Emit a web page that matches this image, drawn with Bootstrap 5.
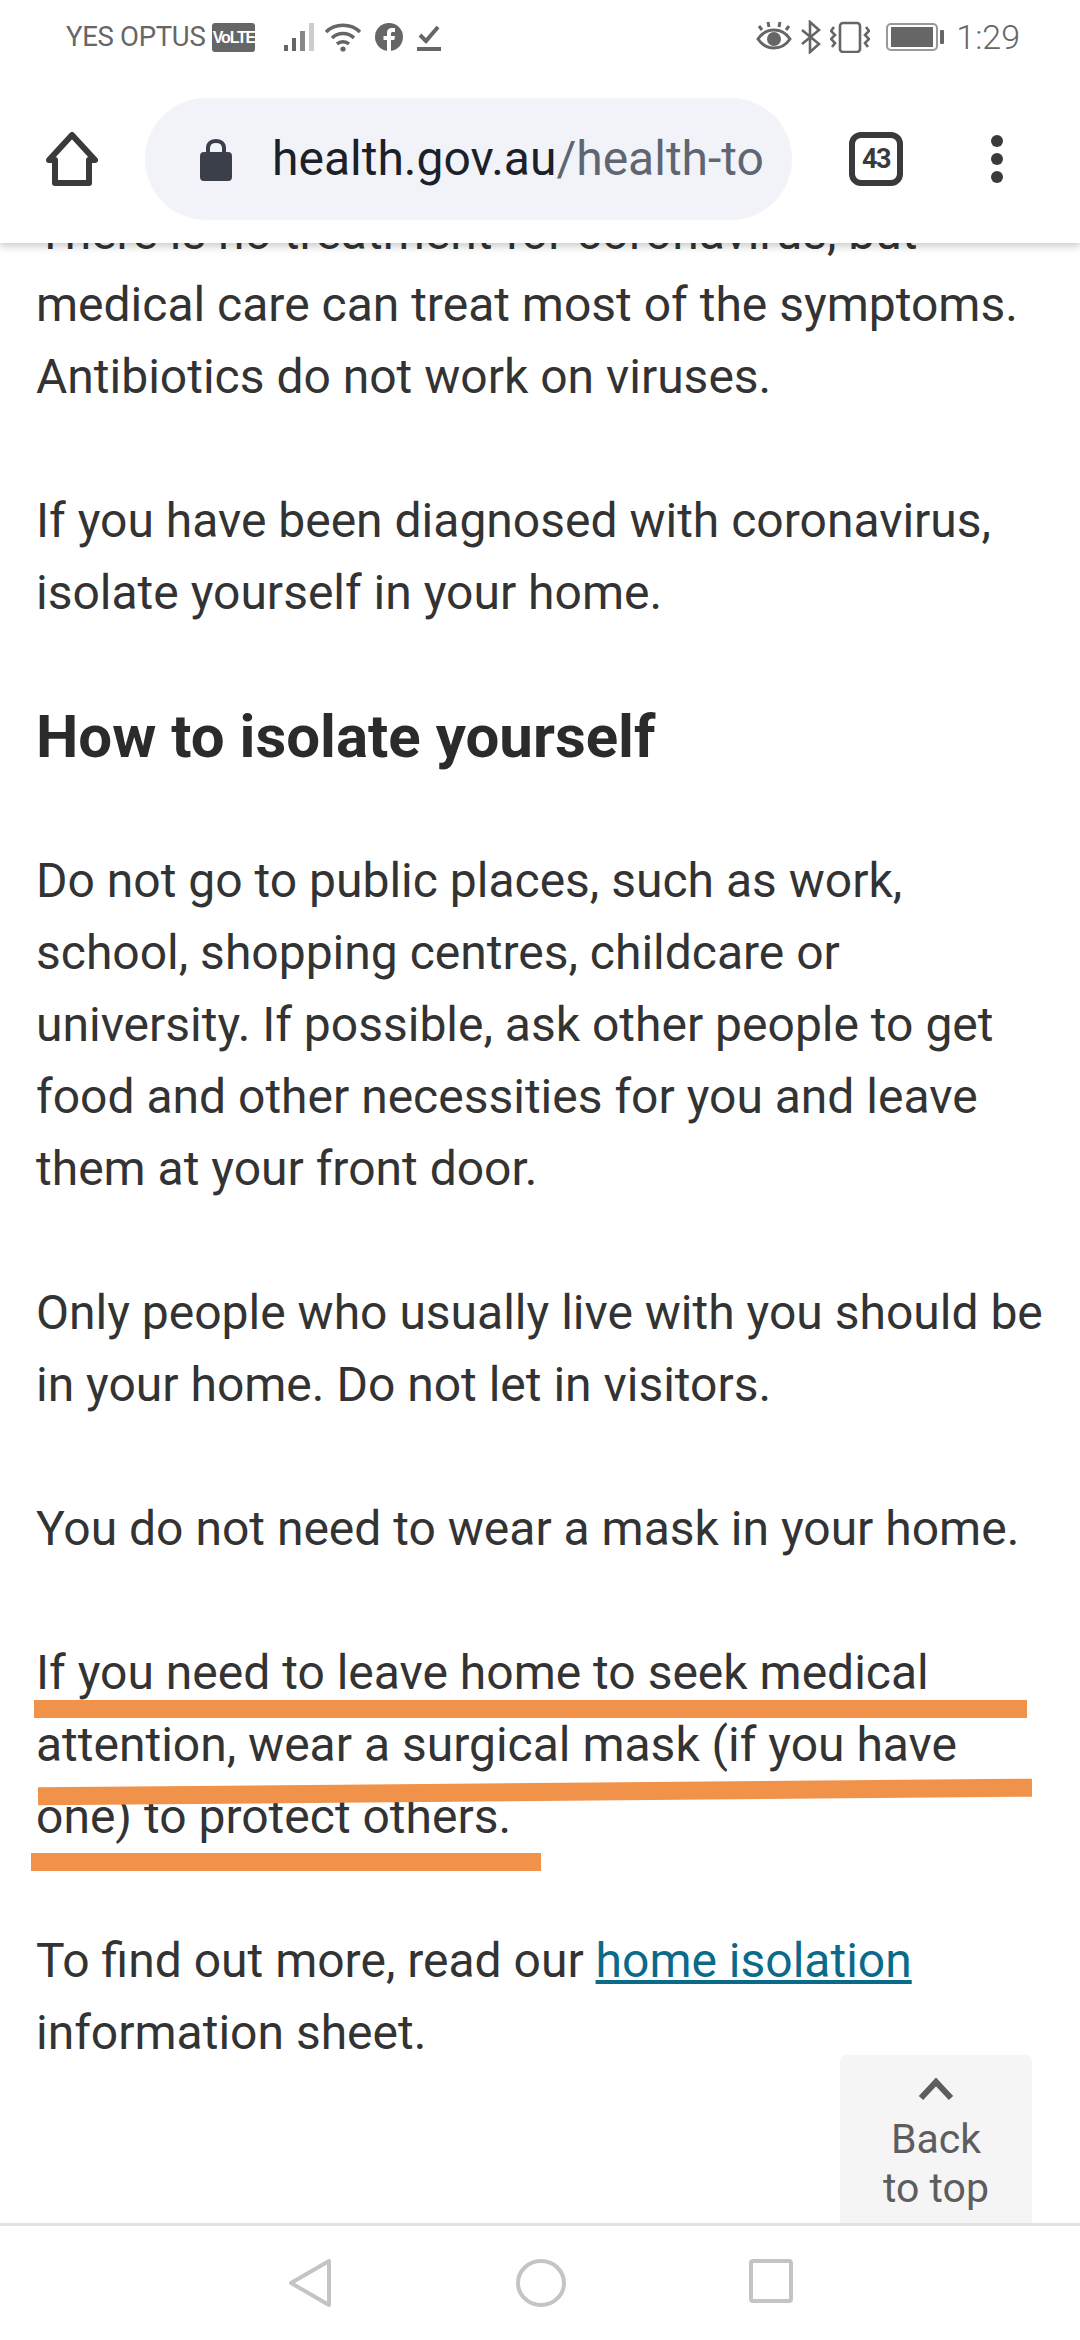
<!DOCTYPE html>
<html lang="en">
<head>
  <meta charset="UTF-8">
  <meta name="viewport" content="width=device-width, initial-scale=1.0">
  <title>How to isolate yourself</title>
  <link href="https://cdn.jsdelivr.net/npm/bootstrap@5.3.0/dist/css/bootstrap.min.css" rel="stylesheet">
  <style>
    body { font-family: Roboto, "Liberation Sans", sans-serif; color: #333; background: #fff; }
    .phone-frame { width: 1080px; height: 2340px; overflow: hidden; }
    .top-chrome { height: 243px; background: #fff; box-shadow: 0 3px 8px rgba(0,0,0,.22); z-index: 5; flex: none; }
    .status-row { height: 74px; padding: 0 60px 0 66px; color: #666; }
    .carrier { font-size: 27.5px; letter-spacing: -.3px; }
    .volte { width: 43px; height: 29px; background: #666; color: #fff; font: bold 16px/29px "Liberation Sans", sans-serif; text-align: center; border-radius: 3px; margin-left: 7px; letter-spacing: -1.2px; }
    .clock { font-size: 34px; font-weight: 300; margin-left: 12px; }
    .url-row { height: 122px; margin-top: 24px; padding-left: 46px; }
    .url-pill { width: 647px; height: 122px; margin-left: 47px; padding-left: 55px; background: #f1f3f9; border-radius: 61px; box-shadow: 0 0 0 1px #f5f5f6 inset; font-size: 48px; color: #5f6672; white-space: nowrap; }
    .url-pill b { font-weight: 400; color: #1c2129; }
    .url-pill svg { margin-right: 40px; flex: none; }
    .tab-count { width: 54px; height: 54px; margin-left: 57px; border: 6px solid #3a3a3c; border-radius: 12px; font: bold 27px/42px Roboto, sans-serif; color: #3a3a3c; text-align: center; letter-spacing: -1.5px; }
    .dots { margin-left: 88px; gap: 6px; }
    .dots i { display: block; width: 12px; height: 12px; border-radius: 50%; background: #3a3a3c; }
    .article { flex: 1 1 auto; min-height: 0; overflow: hidden; padding: 0 30px 0 36px; }
    .article-flow { margin-top: -46px; font-size: 48px; line-height: 72px; }
    .article-flow p { margin: 0 0 72px; }
    .article-flow h2 { margin: 0 0 72px; font-size: 60px; line-height: 72px; font-weight: 700; color: #2b2b2b; }
    .article-flow a { color: #0b6a8a; }
    .marker { position: absolute; height: 18px; background: #f0924a; }
    .marker-one { left: -2px; top: 63px; width: 993px; }
    .marker-two { left: 2px; top: 146px; width: 994px; transform: rotate(-.5deg); }
    .marker-three { left: -5px; top: 216px; width: 510px; }
    .back-top { right: 48px; bottom: 0; width: 192px; height: 168px; background: #f5f5f6; border-radius: 6px 6px 0 0; color: #5d5d60; font-size: 41px; line-height: 49px; padding-top: 22px; }
    .back-top svg { margin-bottom: 14px; }
    .bottom-nav { height: 117px; flex: none; border-top: 3px solid #e3e3e3; background: #fff; padding-top: 33px; padding-left: 289px; }
    .bottom-nav svg { display: block; flex: none; }
    .signal-icon { margin-left: 28px; }
    .wifi-icon { margin-left: 5px; }
    .facebook-icon { margin-left: 12px; }
    .check-icon { margin-left: 13px; }
    .vibrate-icon { margin-left: 8px; }
  </style>
</head>
<body>
  <div class="phone-frame d-flex flex-column position-relative">
    <header class="top-chrome position-relative">
      <div class="status-row d-flex align-items-center">
        <span class="carrier">YES OPTUS</span>
        <span class="volte">VoLTE</span>
        <svg class="signal-icon" width="36" height="32" viewBox="0 0 36 32"><rect x="1" y="24" width="4" height="6" fill="#666"/><rect x="9" y="17" width="4" height="13" fill="#666"/><rect x="17" y="10" width="5" height="20" fill="#888"/><rect x="26" y="2" width="5" height="28" fill="#ccc"/></svg>
        <svg class="wifi-icon" width="38" height="32" viewBox="0 0 38 32" fill="none" stroke="#666" stroke-width="3.4"><path d="M2 11C11 2 27 2 36 11"/><path d="M8 17C14 11 24 11 30 17"/><path d="M13 23C16 20 22 20 25 23"/><circle cx="19" cy="28" r="2.6" fill="#666" stroke="none"/></svg>
        <svg class="facebook-icon" width="30" height="30" viewBox="0 0 30 30"><circle cx="15" cy="15" r="14" fill="#666"/><path d="M13 29V18H9.500V14H13V11C13 7.500 15 6 18 6H21V10H19C17.500 10 17 10.500 17 12V14H21L20.300 18H17V29Z" fill="#fff"/></svg>
        <svg class="check-icon" width="24" height="30" viewBox="0 0 24 30" fill="none" stroke="#666"><path d="M3 13L9 19L21 5" stroke-width="4"/><path d="M0 27H24" stroke-width="4"/></svg>
        <svg class="ms-auto" width="36" height="32" viewBox="0 0 36 32" fill="none" stroke="#666" stroke-width="3"><path d="M2 18C10 6 26 6 34 18C26 30 10 30 2 18Z"/><circle cx="18" cy="18" r="5.500" fill="#666"/><path d="M6 9L3 5M13 6L12 1M23 6L24 1M30 9L33 5"/></svg>
        <svg class="ms-2" width="22" height="34" viewBox="0 0 22 34" fill="none" stroke="#666" stroke-width="2.600"><path d="M2 10L19 24L10 32V2L19 10L2 24"/></svg>
        <svg class="vibrate-icon" width="40" height="32" viewBox="0 0 40 32" fill="none" stroke="#666" stroke-width="2.600"><rect x="10" y="2" width="20" height="29" rx="3"/><path d="M4 6L1 10L5 14L1 18L5 22L2 26M36 6L39 10L35 14L39 18L35 22L38 26"/></svg>
        <svg class="ms-3" width="58" height="28" viewBox="0 0 58 28"><rect x="1" y="1" width="50" height="26" rx="4" fill="none" stroke="#999" stroke-width="2"/><rect x="5" y="4" width="42" height="20" fill="#666"/><rect x="54" y="7" width="4" height="14" rx="1" fill="#666"/></svg>
        <span class="clock">1:29</span>
      </div>
      <div class="url-row d-flex align-items-center">
        <svg width="52" height="54" viewBox="0 0 52 54" fill="none" stroke="#3a3a3c" stroke-width="6" stroke-linejoin="round"><path d="M3 28L26 3L49 28H43V51H9V28Z"/></svg>
        <div class="url-pill d-flex align-items-center">
          <svg width="32" height="44" viewBox="0 0 32 44"><path d="M8 18V11C8 1.500 24 1.500 24 11V18" fill="none" stroke="#3a3f4a" stroke-width="4"/><rect y="15" width="32" height="29" rx="4" fill="#3a3f4a"/></svg>
          <span><b>health.gov.au</b>/health-to</span>
        </div>
        <div class="tab-count">43</div>
        <div class="dots d-flex flex-column"><i></i><i></i><i></i></div>
      </div>
    </header>

    <main class="article position-relative">
      <div class="article-flow">
        <p>There is no treatment for coronavirus, but medical care can treat most of the symptoms. Antibiotics do not work on viruses.</p>
        <p>If you have been diagnosed with coronavirus, isolate yourself in your home.</p>
        <h2>How to isolate yourself</h2>
        <p>Do not go to public places, such as work, school, shopping centres, childcare or university. If possible, ask other people to get food and other necessities for you and leave them at your front door.</p>
        <p>Only people who usually live with you should be in your home. Do not let in visitors.</p>
        <p>You do not need to wear a mask in your home.</p>
        <p class="position-relative">If you need to leave home to seek medical attention, wear a surgical mask (if you have one) to protect others.
          <span class="marker marker-one"></span>
          <span class="marker marker-two"></span>
          <span class="marker marker-three"></span>
        </p>
        <p>To find out more, read our <a href="#">home isolation</a> information sheet.</p>
      </div>
      <a class="back-top position-absolute text-center text-decoration-none" href="#">
        <svg class="d-block mx-auto" width="36" height="24" viewBox="0 0 36 24" fill="none" stroke="#5d5d60" stroke-width="6"><path d="M3 21L18 5L33 21"/></svg>
        Back<br>to top
      </a>
    </main>

    <nav class="bottom-nav d-flex align-items-start">
      <svg width="42" height="48" viewBox="0 0 42 48" fill="none" stroke="#c4c4c4" stroke-width="4" stroke-linejoin="round"><path d="M40 2V46L2 24Z"/></svg>
      <svg style="margin-left:185px" width="50" height="48" viewBox="0 0 50 48" fill="none" stroke="#c4c4c4" stroke-width="4"><ellipse cx="25" cy="24" rx="23" ry="22"/></svg>
      <svg style="margin-left:183px" width="44" height="44" viewBox="0 0 44 44" fill="none" stroke="#c4c4c4" stroke-width="4"><rect x="2" y="2" width="40" height="40" rx="2"/></svg>
    </nav>
  </div>
  <script src="https://cdn.jsdelivr.net/npm/bootstrap@5.3.0/dist/js/bootstrap.bundle.min.js"></script>
</body>
</html>
